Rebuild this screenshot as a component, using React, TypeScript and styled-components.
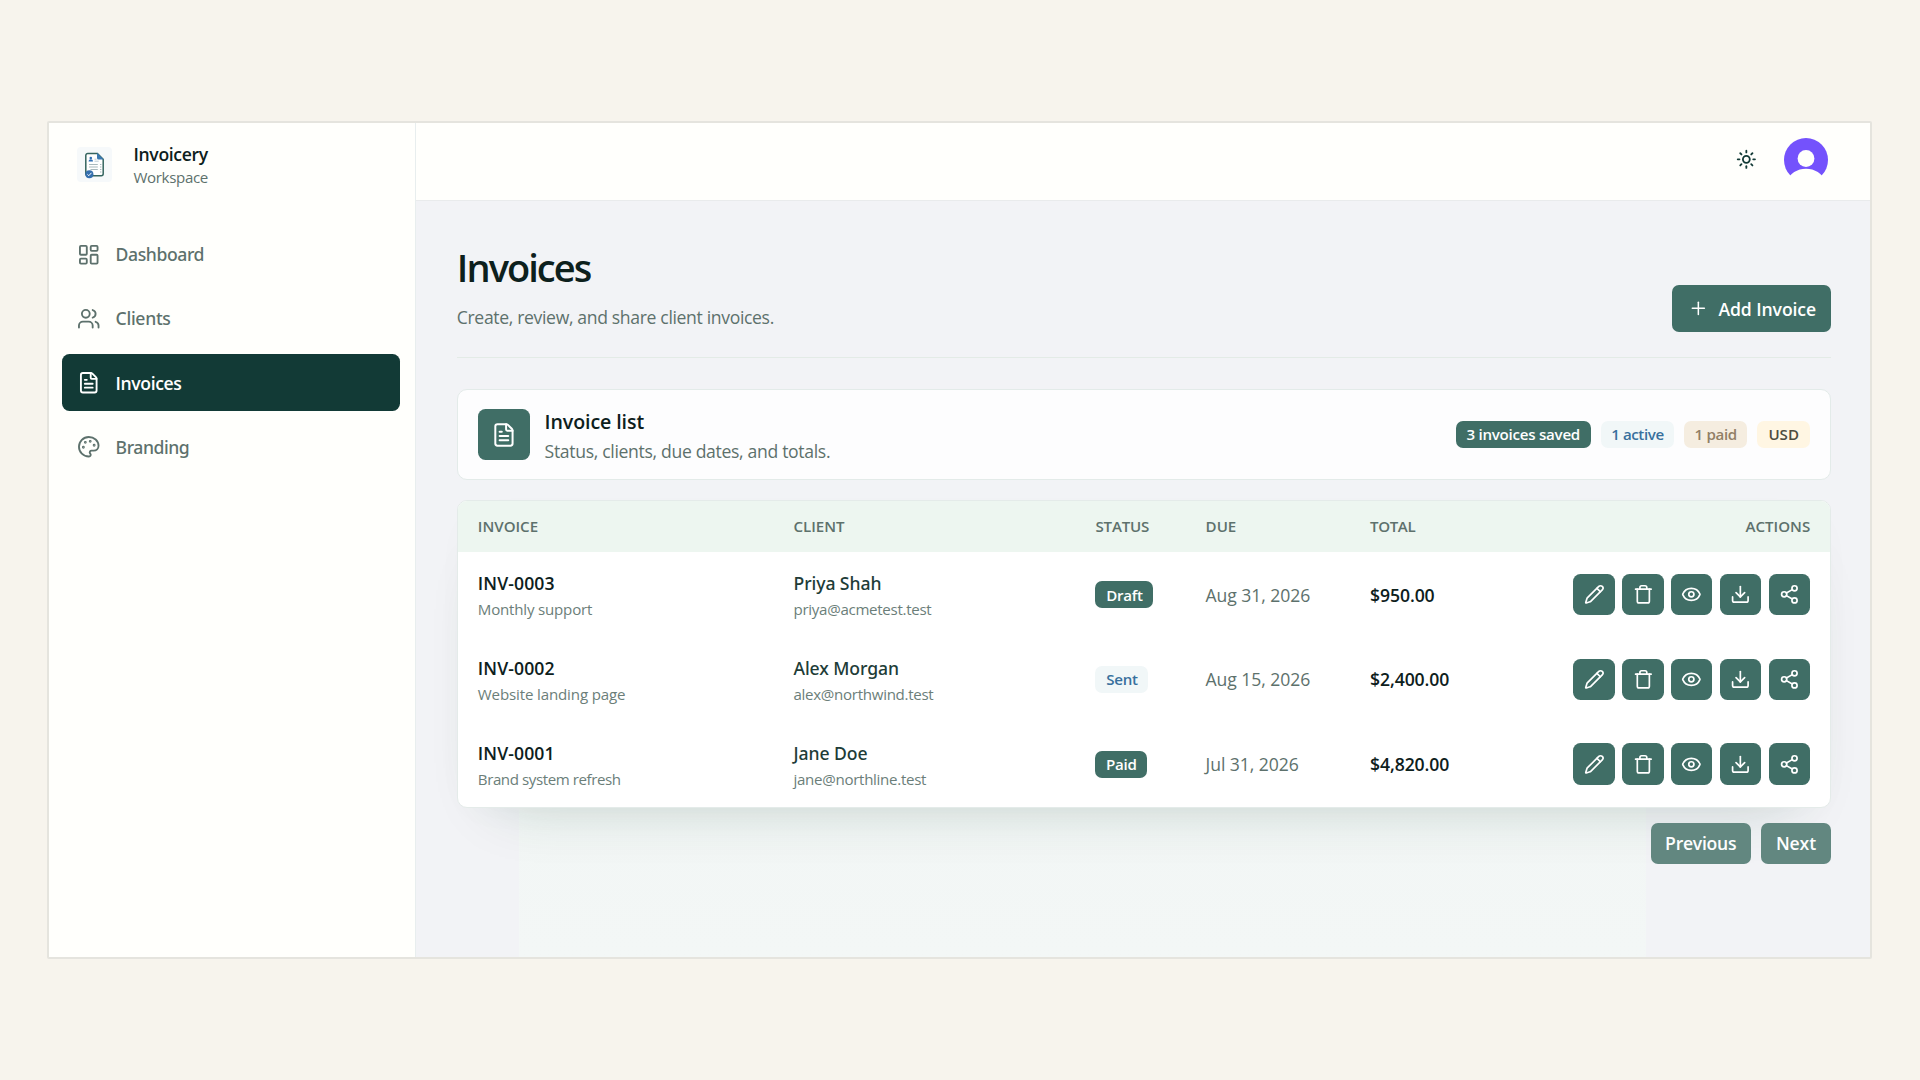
import React from 'react';
import styled, { createGlobalStyle } from 'styled-components';
import {
  Download,
  Eye,
  FileText,
  LayoutDashboard,
  Palette,
  Pencil,
  Plus,
  Share2,
  Sun,
  Trash,
  Users,
} from 'lucide-react';

const color = {
  canvas: '#f7f4ed',
  surface: '#fffffc',
  main: '#f2f3f6',
  primary: '#406e66',
  active: '#123a36',
  ink: '#0d201c',
  muted: '#5d716c',
};

const GlobalStyle = createGlobalStyle`
  * { box-sizing: border-box; }
  body {
    margin: 0;
    background: ${color.canvas};
    font-family: "Open Sans", "Noto Sans", sans-serif;
    color: ${color.ink};
  }
  button { font-family: inherit; border: 0; }
`;

const Page = styled.div`
  width: 1920px;
  height: 1080px;
  padding: 121px 48px 0 47px;
  overflow: hidden;
`;

const Frame = styled.div`
  display: grid;
  grid-template-columns: 366.5px 1fr;
  height: 837.5px;
  border: 2px solid #e5e4de;
  border-radius: 2px;
  overflow: hidden;
`;

const Sidebar = styled.aside`
  background: ${color.surface};
  border-right: 1.3px solid #e8eeee;
  padding: 19px 14.5px 0 12.6px;
`;

const Brand = styled.div`
  display: flex;
  align-items: flex-start;
  gap: 21px;
  padding-left: 15.9px;
`;

const LogoTile = styled.div`
  display: grid;
  place-items: center;
  width: 35px;
  height: 35px;
  margin-top: 5px;
  background: #f6f9fa;
  border-radius: 4px;
`;

const face = (weight = 400) =>
  weight === 500 ? '"Noto Sans", "Open Sans", sans-serif' : '"Open Sans", "Noto Sans", sans-serif';

const Line = styled.div<{ $size: number; $height: number; $weight?: number; $track?: number; $tone?: string }>`
  margin: 0;
  font-family: ${(p) => face(p.$weight)};
  font-size: ${(p) => p.$size}px;
  line-height: ${(p) => p.$height}px;
  font-weight: ${(p) => p.$weight ?? 400};
  letter-spacing: ${(p) => p.$track ?? 0}px;
  color: ${(p) => p.$tone ?? color.ink};
  white-space: nowrap;
`;

const Nav = styled.nav`
  display: flex;
  flex-direction: column;
  gap: 7.7px;
  margin-top: 38px;
`;

const NavItem = styled.a<{ $active?: boolean; $track: number }>`
  display: flex;
  align-items: center;
  gap: 15.5px;
  height: 56.5px;
  padding-left: 15px;
  border-radius: 7.5px;
  font-family: ${(p) => face(p.$active ? 600 : 500)};
  font-size: 17.6px;
  line-height: 26px;
  font-weight: ${(p) => (p.$active ? 600 : 500)};
  letter-spacing: ${(p) => p.$track}px;
  color: ${(p) => (p.$active ? '#fff' : color.muted)};
  background: ${(p) => (p.$active ? color.active : 'transparent')};
`;

const Main = styled.main`
  display: flex;
  flex-direction: column;
  background: ${color.main};
`;

const TopBar = styled.header`
  display: flex;
  justify-content: flex-end;
  align-items: center;
  gap: 26.5px;
  flex: none;
  height: 78.3px;
  padding: 0 42.5px 4px 0;
  background: ${color.surface};
  border-bottom: 1.5px solid #e9ebec;
`;

const Content = styled.div`
  flex: 1;
  padding: 40.7px 39.3px 0 41.3px;
  background: linear-gradient(#f2f6f5, #f3f7f6) 103.5px 100% / 1127px 150px no-repeat;
`;

const PageHeader = styled.div`
  display: flex;
  justify-content: space-between;
  align-items: flex-end;
  padding-bottom: 25px;
  border-bottom: 1.3px solid #e3ebe6;
`;

const TitleGroup = styled.div`
  display: flex;
  flex-direction: column;
  gap: 11px;
`;

const AddButton = styled.button`
  display: flex;
  align-items: center;
  gap: 10px;
  width: 158.5px;
  height: 46.6px;
  padding: 0 0 0 15.5px;
  border-radius: 7px;
  color: #fff;
  background: ${color.primary};
  font-size: 17.6px;
  font-weight: 600;
  letter-spacing: -0.08px;
  line-height: 24px;
  white-space: nowrap;
`;

const ListCard = styled.section`
  display: flex;
  align-items: center;
  height: 91px;
  margin-top: 31px;
  padding: 0 19.5px 0 20px;
  background: #fdfdfe;
  border: 1.3px solid #e3ebe9;
  border-radius: 10px;
`;

const ListIcon = styled.div`
  display: grid;
  place-items: center;
  width: 51.8px;
  height: 51.8px;
  border-radius: 7.5px;
  color: #fff;
  background: ${color.primary};
`;

const ListText = styled.div`
  margin: 4.5px auto 0 15px;
`;

const BadgeRow = styled.div`
  display: flex;
  gap: 10px;
`;

const tones = {
  solid: { bg: color.primary, fg: '#fff' },
  info: { bg: '#f1f7f8', fg: '#38709d' },
  sand: { bg: '#f5ede0', fg: '#917f66' },
  cream: { bg: '#fff6e3', fg: '#4d4b3e' },
};
type Tone = keyof typeof tones;

const Badge = styled.span<{ $tone: Tone; $width: number; $track?: number }>`
  display: inline-flex;
  align-items: center;
  justify-content: center;
  width: ${(p) => p.$width}px;
  height: 27px;
  border-radius: 7px;
  font-size: 15.1px;
  font-weight: 600;
  letter-spacing: ${(p) => p.$track ?? -0.25}px;
  white-space: nowrap;
  color: ${(p) => tones[p.$tone].fg};
  background: ${(p) => tones[p.$tone].bg};
`;

const Table = styled.section`
  margin-top: 20.3px;
  border: 1.3px solid #e4ebe9;
  border-radius: 10px;
  background: #fff;
  overflow: hidden;
  box-shadow: 0 32px 60px -42px rgba(18, 70, 52, 0.24), 0 10px 40px -14px rgba(18, 58, 50, 0.035);
`;

const Row = styled.div`
  display: grid;
  grid-template-columns: 315.7px 302px 110.1px 164.5px 1fr;
  align-items: center;
  height: 84.8px;
  padding: 0 19.5px 0 20px;
`;

const HeadRow = styled(Row)`
  height: 50.9px;
  padding-bottom: 1px;
  background: #edf6f0;
`;

const HeadCell = styled.div<{ $track?: number }>`
  font-size: 15.1px;
  line-height: 20px;
  font-weight: 600;
  letter-spacing: ${(p) => p.$track ?? 0}px;
  color: ${color.muted};
`;

const TotalCell = styled.div`
  display: flex;
  justify-content: space-between;
  align-items: center;
`;

const Stack = styled.div`
  margin-top: 3.4px;
`;

const Actions = styled.div`
  display: flex;
  gap: 7.6px;
`;

const IconButton = styled.button`
  display: grid;
  place-items: center;
  width: 41.3px;
  height: 41.4px;
  padding: 0;
  border-radius: 7.5px;
  color: #fff;
  background: ${color.primary};
`;

const Pager = styled.div`
  display: flex;
  justify-content: flex-end;
  gap: 10.5px;
  margin-top: 15.5px;
`;

const PagerButton = styled.button<{ $width: number; $track: number }>`
  width: ${(p) => p.$width}px;
  height: 40.6px;
  padding: 0;
  border-radius: 7px;
  color: #fdfefe;
  background: #628780;
  font-size: 17.6px;
  font-weight: 600;
  letter-spacing: ${(p) => p.$track}px;
`;

const Logo = () => (
  <svg width="22" height="28" viewBox="0 0 22 28" fill="none">
    <path d="M3.8 2.4h9.6l5.8 5.8v14.6a2 2 0 0 1-2 2H3.8a2 2 0 0 1-2-2V4.4a2 2 0 0 1 2-2z" fill="#fff" stroke="#35655f" strokeWidth="1.5" />
    <path d="M13 1.8l6.8 6.8h-5.2a1.6 1.6 0 0 1-1.6-1.6z" fill="#3a78b0" />
    <circle cx="6.8" cy="7" r="1.3" fill="#2f6fb5" />
    <path d="M4.6 10.6c0-3 4.4-3 4.4 0z" fill="#2f6fb5" />
    <path d="M10.5 8.2h2M10.5 10.2h4.2" stroke="#bccbd5" strokeWidth="1" />
    <path d="M5 13.5h8.8M5 16h8.8M6.5 18.5h7.3M16 13.5h1.4M16 16h1.4M16 18.5h1.4M16 21h1.4" stroke="#a9b9bd" strokeWidth="1.1" />
    <circle cx="5.4" cy="23.2" r="4" fill="#356fae" />
    <path d="M3.4 23.3l1.4 1.4 2.7-2.9" stroke="#fff" strokeWidth="1" />
  </svg>
);

const Avatar = () => (
  <svg width="44" height="44" viewBox="0 0 44 44">
    <circle cx="22" cy="22" r="22" fill="#7452fc" />
    <circle cx="22" cy="20.5" r="8.4" fill={color.surface} />
    <path d="M0 48c4-11.5 12-17.3 22-17.3S40 36.500 44 48z" fill={color.surface} />
  </svg>
);

const navItems = [
  { label: 'Dashboard', icon: LayoutDashboard, track: -0.42 },
  { label: 'Clients', icon: Users, track: -0.3 },
  { label: 'Invoices', icon: FileText, track: -0.4, active: true },
  { label: 'Branding', icon: Palette, track: -0.45 },
];

type Invoice = {
  id: string;
  note: string;
  noteTrack: number;
  client: string;
  email: string;
  status: string;
  tone: Tone;
  badge: number;
  due: string;
  total: string;
};

const invoices: Invoice[] = [
  { id: 'INV-0003', note: 'Monthly support', noteTrack: -0.2, client: 'Priya Shah', email: 'priya@acmetest.test', status: 'Draft', tone: 'solid', badge: 58, due: 'Aug 31, 2026', total: '$950.00' },
  { id: 'INV-0002', note: 'Website landing page', noteTrack: -0.15, client: 'Alex Morgan', email: 'alex@northwind.test', status: 'Sent', tone: 'info', badge: 53, due: 'Aug 15, 2026', total: '$2,400.00' },
  { id: 'INV-0001', note: 'Brand system refresh', noteTrack: -0.42, client: 'Jane Doe', email: 'jane@northline.test', status: 'Paid', tone: 'solid', badge: 51.5, due: 'Jul 31, 2026', total: '$4,820.00' },
];

const actions = [Pencil, Trash, Eye, Download, Share2];

export default function App() {
  return (
    <Page>
      <GlobalStyle />
      <Frame>
        <Sidebar>
          <Brand>
            <LogoTile><Logo /></LogoTile>
            <div>
              <Line $size={17.6} $height={24} $weight={600} $track={-0.35}>Invoicery</Line>
              <Line $size={15.1} $height={22} $track={-0.35} $tone={color.muted}>Workspace</Line>
            </div>
          </Brand>
          <Nav>
            {navItems.map(({ label, icon: Icon, track, active }) => (
              <NavItem key={label} $active={active} $track={track}>
                <Icon size={23.5} strokeWidth={1.9} />
                {label}
              </NavItem>
            ))}
          </Nav>
        </Sidebar>
        <Main>
          <TopBar>
            <Sun size={20.7} strokeWidth={2.1} color={color.active} />
            <Avatar />
          </TopBar>
          <Content>
            <PageHeader>
              <TitleGroup>
                <Line as="h1" $size={38} $height={50} $weight={600} $track={-1.95}>Invoices</Line>
                <Line $size={17.6} $height={29} $track={-0.35} $tone={color.muted}>Create, review, and share client invoices.</Line>
              </TitleGroup>
              <AddButton>
                <Plus size={20.7} strokeWidth={1.75} />
                Add Invoice
              </AddButton>
            </PageHeader>
            <ListCard>
              <ListIcon><FileText size={25.9} strokeWidth={1.85} /></ListIcon>
              <ListText>
                <Line $size={19.6} $height={29.8} $weight={600} $track={-0.1}>Invoice list</Line>
                <Line $size={17.6} $height={29.8} $track={-0.33} $tone={color.muted}>Status, clients, due dates, and totals.</Line>
              </ListText>
              <BadgeRow>
                <Badge $tone="solid" $width={135}>3 invoices saved</Badge>
                <Badge $tone="info" $width={73.5} $track={-0.4}>1 active</Badge>
                <Badge $tone="sand" $width={63} $track={-0.35}>1 paid</Badge>
                <Badge $tone="cream" $width={53} $track={0}>USD</Badge>
              </BadgeRow>
            </ListCard>
            <Table>
              <HeadRow>
                <HeadCell>INVOICE</HeadCell>
                <HeadCell>CLIENT</HeadCell>
                <HeadCell $track={-0.2}>STATUS</HeadCell>
                <HeadCell>DUE</HeadCell>
                <TotalCell>
                  <HeadCell $track={-0.4}>TOTAL</HeadCell>
                  <HeadCell>ACTIONS</HeadCell>
                </TotalCell>
              </HeadRow>
              {invoices.map((inv) => (
                <Row key={inv.id}>
                  <Stack>
                    <Line $size={17.6} $height={26} $weight={600} $track={0.1}>{inv.id}</Line>
                    <Line $size={15.1} $height={26} $track={inv.noteTrack} $tone="#6b7e79">{inv.note}</Line>
                  </Stack>
                  <Stack>
                    <Line $size={17.6} $height={26} $weight={500} $track={-0.08} $tone="#213c37">{inv.client}</Line>
                    <Line $size={15.1} $height={26} $track={-0.3} $tone="#6b7e79">{inv.email}</Line>
                  </Stack>
                  <div><Badge $tone={inv.tone} $width={inv.badge}>{inv.status}</Badge></div>
                  <Line $size={17.6} $height={26} $track={-0.08} $tone={color.muted}>{inv.due}</Line>
                  <TotalCell>
                    <Line $size={17.6} $height={26} $weight={600} $track={-0.1}>{inv.total}</Line>
                    <Actions>
                      {actions.map((Icon, i) => (
                        <IconButton key={i}><Icon size={20.7} strokeWidth={1.95} /></IconButton>
                      ))}
                    </Actions>
                  </TotalCell>
                </Row>
              ))}
            </Table>
            <Pager>
              <PagerButton $width={100} $track={-0.27}>Previous</PagerButton>
              <PagerButton $width={69.5} $track={-0.15}>Next</PagerButton>
            </Pager>
          </Content>
        </Main>
      </Frame>
    </Page>
  );
}
